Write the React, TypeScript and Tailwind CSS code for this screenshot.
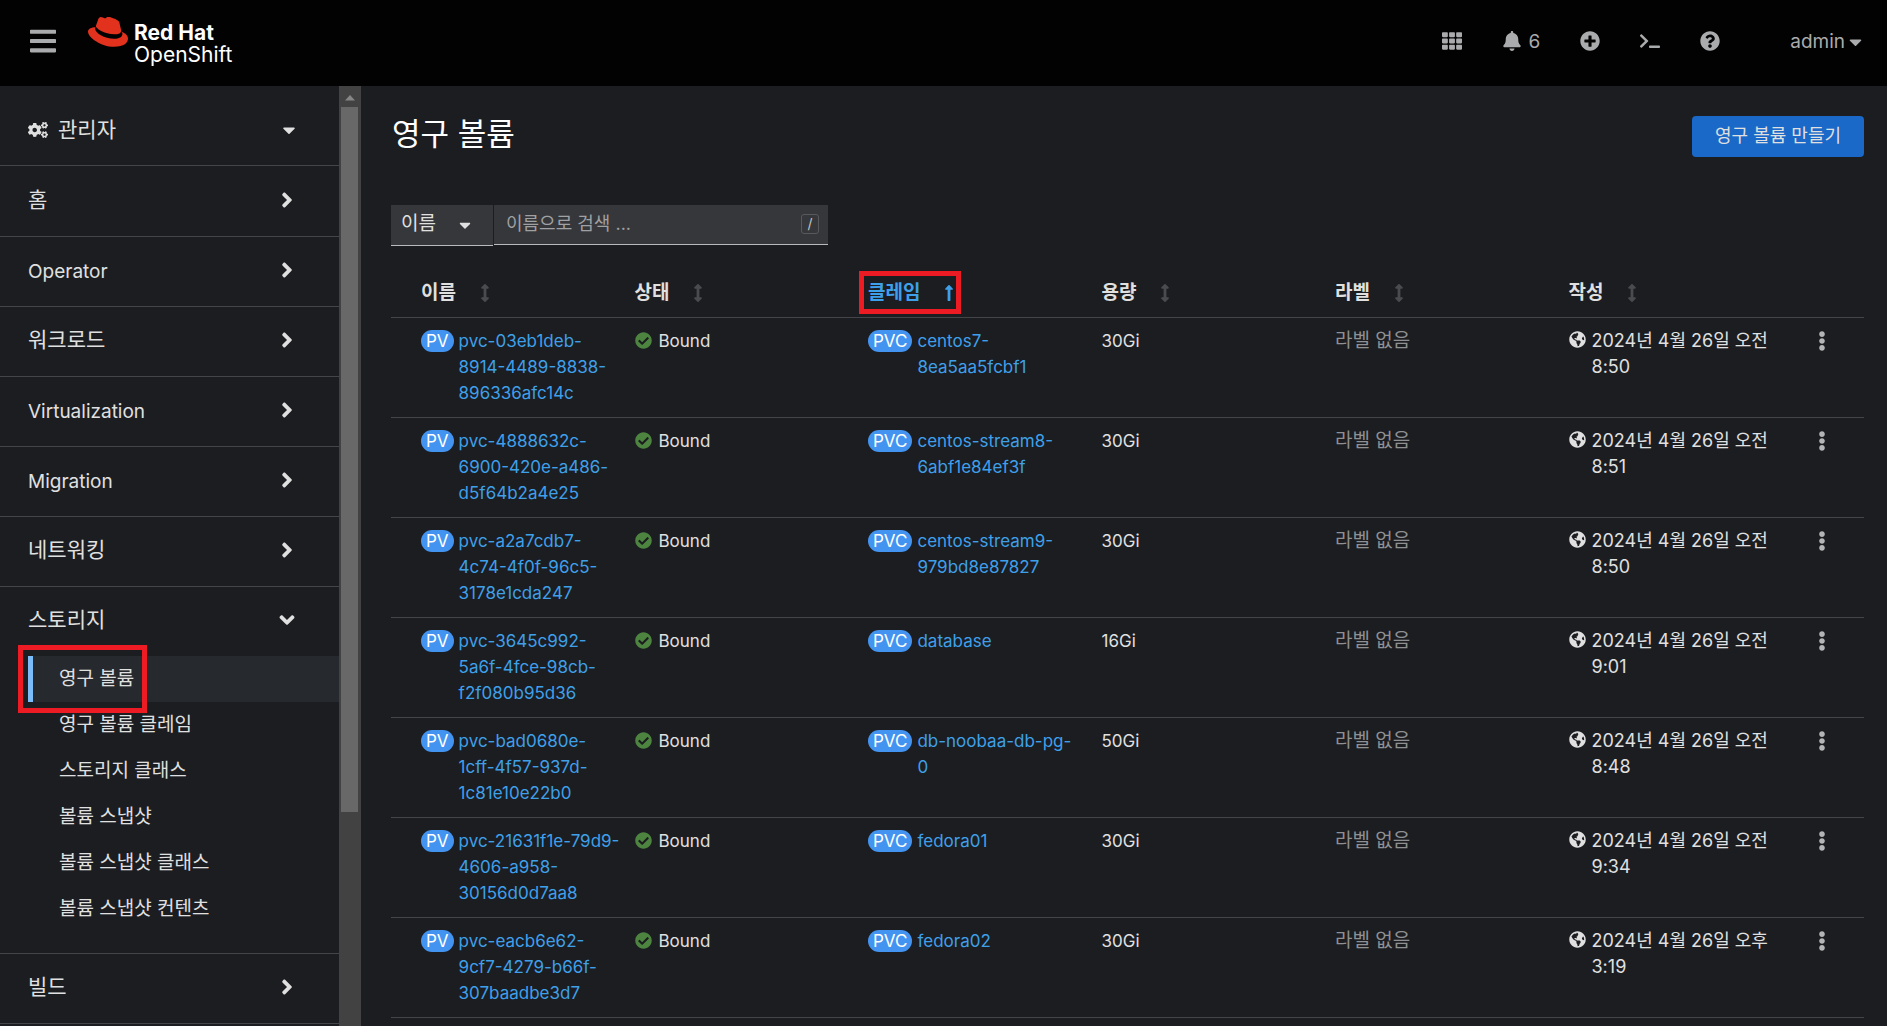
import { useState } from "react";
import type { ReactNode } from "react";
import {
  FaAngleDown,
  FaAngleRight,
  FaArrowsAltV,
  FaBars,
  FaBell,
  FaCaretDown,
  FaCheckCircle,
  FaCogs,
  FaEllipsisV,
  FaGlobeAmericas,
  FaLongArrowAltUp,
  FaPlusCircle,
  FaQuestionCircle,
  FaTerminal,
  FaTh,
} from "react-icons/fa";

type Volume = { name: string; claim: string; size: string; created: string };

const volumes: Volume[] = [
  { name: "pvc-03eb1deb-8914-4489-8838-896336afc14c", claim: "centos7-8ea5aa5fcbf1", size: "30Gi", created: "2024년 4월 26일 오전 8:50" },
  { name: "pvc-4888632c-6900-420e-a486-d5f64b2a4e25", claim: "centos-stream8-6abf1e84ef3f", size: "30Gi", created: "2024년 4월 26일 오전 8:51" },
  { name: "pvc-a2a7cdb7-4c74-4f0f-96c5-3178e1cda247", claim: "centos-stream9-979bd8e87827", size: "30Gi", created: "2024년 4월 26일 오전 8:50" },
  { name: "pvc-3645c992-5a6f-4fce-98cb-f2f080b95d36", claim: "database", size: "16Gi", created: "2024년 4월 26일 오전 9:01" },
  { name: "pvc-bad0680e-1cff-4f57-937d-1c81e10e22b0", claim: "db-noobaa-db-pg-0", size: "50Gi", created: "2024년 4월 26일 오전 8:48" },
  { name: "pvc-21631f1e-79d9-4606-a958-30156d0d7aa8", claim: "fedora01", size: "30Gi", created: "2024년 4월 26일 오전 9:34" },
  { name: "pvc-eacb6e62-9cf7-4279-b66f-307baadbe3d7", claim: "fedora02", size: "30Gi", created: "2024년 4월 26일 오후 3:19" },
];

const columns = ["이름", "상태", "클레임", "용량", "라벨", "작성"];

const storageItems = ["영구 볼륨", "영구 볼륨 클레임", "스토리지 클래스", "볼륨 스냅샷", "볼륨 스냅샷 클래스", "볼륨 스냅샷 컨텐츠"];

function Logo() {
  return (
    <a href="#home" aria-label="Red Hat OpenShift" className="ml-8 flex items-start gap-[6px] text-white">
      <svg viewBox="0 0 40 30" className="h-[30px] w-10" aria-hidden="true">
        <path
          fill="#e2321d"
          d="M26.8 17.3c2.6 0 6.4-.5 6.4-3.6 0-.3 0-.5-.1-.8L31.500 6.100C31.100 4.600 30.800 3.900 28.100 2.500 26 1.400 21.400-.3 20-.3c-1.300 0-1.600 1.600-3.100 1.600C15.400 1.300 14.300.1 12.900.1c-1.300 0-2.200.9-2.900 2.800 0 0-1.800 5.200-2.100 5.900v.4c0 2 8 8.100 18.900 8.100M34 14.800c.4 1.800.4 2 .4 2.200 0 3.100-3.500 4.800-8 4.800-10.300 0-19.300-6-19.300-10 0-.6.1-1.100.3-1.600C3.700 10.400 0 11.400 0 14.700 0 20.100 12.800 29.800 26 29.800c10.100 0 14-4 14-8.200 0-3-2.200-5-6-6.800"
        />
      </svg>
      <span className="flex flex-col pt-[5px] text-[21px] leading-[22px]">
        <span className="font-bold">Red Hat</span>
        <span>OpenShift</span>
      </span>
    </a>
  );
}

function IconButton({ label, children }: { label: string; children: ReactNode }) {
  return (
    <button type="button" aria-label={label} className="flex h-11 items-center gap-[6px] px-5">
      {children}
    </button>
  );
}

function NavSection({ label, latin, open, children }: { label: string; latin?: boolean; open?: boolean; children?: ReactNode }) {
  return (
    <li className="border-b border-[#444548]">
      <button
        type="button"
        aria-expanded={!!open}
        className={`flex h-[69px] w-full items-center justify-between pr-10 pb-1 pl-7 ${latin ? "text-[19px]" : "text-[21px]"}`}
      >
        <span className={latin ? "pt-1" : ""}>{label}</span>
        {open ? <FaAngleDown size={24} /> : <FaAngleRight size={24} />}
      </button>
      {children}
    </li>
  );
}

function Sidebar() {
  return (
    <nav aria-label="관리자" className="w-[339px] shrink-0 overflow-hidden">
      <button type="button" className="flex h-20 w-full items-center border-b border-[#444548] pt-2 pr-10 pl-7 text-[21px]">
        <FaCogs size={20} />
        <span className="ml-[10px]">관리자</span>
        <FaCaretDown size={20} className="ml-auto" />
      </button>
      <ul className="pt-px">
        <NavSection label="홈" />
        <NavSection label="Operator" latin />
        <NavSection label="워크로드" />
        <NavSection label="Virtualization" latin />
        <NavSection label="Migration" latin />
        <NavSection label="네트워킹" />
        <NavSection label="스토리지" open>
          <ul className="pb-[21px] text-[19px]">
            {storageItems.map((item, i) => (
              <li key={item} className="relative">
                <a
                  href={`#storage-${i}`}
                  aria-current={i === 0 ? "page" : undefined}
                  className={
                    i === 0
                      ? "ml-7 flex h-[46px] items-center border-l-[5px] border-[#7cbcf8] bg-[#26292d] pl-[26px]"
                      : "ml-7 flex h-[46px] items-center pl-[31px]"
                  }
                >
                  {item}
                </a>
                {i === 0 && (
                  <span className="pointer-events-none absolute -top-[11px] left-[18px] z-10 h-[68px] w-[129px] border-[5px] border-[#ed1c24]" />
                )}
              </li>
            ))}
          </ul>
        </NavSection>
        <NavSection label="빌드" />
      </ul>
    </nav>
  );
}

function SidebarScrollbar() {
  return (
    <div aria-hidden="true" className="flex w-[22px] shrink-0 flex-col items-center bg-[#424242] pr-px">
      <svg viewBox="0 0 10 6" className="mt-[9px] mb-[6px] h-[6px] w-[10px] shrink-0">
        <path d="M5 0l5 5.500H0z" fill="#868686" />
      </svg>
      <div className="h-3/4 w-[17px] bg-[#686868]" />
    </div>
  );
}

function Resource({ badge, name }: { badge: string; name: string }) {
  return (
    <div className="flex items-start gap-[5px]">
      <span className="mt-[2px] shrink-0 rounded-full bg-[#4394f0] px-[5px] text-[17px] leading-[22px] text-white">{badge}</span>
      <a href={`#${name}`} className="text-[#3fa0ea]">
        {name}
      </a>
    </div>
  );
}

export default function App() {
  const [query, setQuery] = useState("");
  return (
    <div className="flex h-screen flex-col overflow-hidden bg-[#1b1d21] font-['Inter','Noto_Sans_CJK_KR',sans-serif] text-[17px] leading-[26px] text-[#e0e0e0]">
      <header className="flex h-[86px] shrink-0 items-start bg-[#020202] text-[#aaabac]">
        <button type="button" aria-label="메뉴" className="mt-[26px] ml-[30px]">
          <FaBars size={30} className="w-[26px]" />
        </button>
        <div className="pt-[17px]">
          <Logo />
        </div>
        <div className="mt-[19px] ml-auto flex items-center pr-[25px] text-[19px]">
          <IconButton label="애플리케이션">
            <FaTh size={20} />
          </IconButton>
          <IconButton label="알림 6개">
            <FaBell size={20} />
            <span className="pt-[2px]">6</span>
          </IconButton>
          <IconButton label="추가">
            <FaPlusCircle size={20} />
          </IconButton>
          <IconButton label="터미널">
            <FaTerminal size={20} />
          </IconButton>
          <IconButton label="도움말">
            <FaQuestionCircle size={20} />
          </IconButton>
          <button type="button" className="ml-[50px] flex h-11 items-center gap-1 pt-[2px]">
            <span>admin</span>
            <FaCaretDown size={20} className="w-[13px]" />
          </button>
        </div>
      </header>

      <div className="flex min-h-0 flex-1">
        <Sidebar />
        <SidebarScrollbar />
        <main className="min-w-0 flex-1 overflow-hidden pr-[23px] pl-[30px]">
          <div className="flex h-[119px] items-start justify-between pt-[30px]">
            <h1 className="pl-px text-[31px] leading-9 text-white">영구 볼륨</h1>
            <button type="button" className="h-[41px] rounded-[4px] bg-[#1a68c7] px-[23px] pb-[2px] text-[18px]">
              영구 볼륨 만들기
            </button>
          </div>

          <div className="flex items-start gap-px">
            <div className="relative w-[102px] border-b border-[#b9babc] bg-[#36373a]">
              <select aria-label="필터" className="h-10 w-full appearance-none bg-transparent pb-[2px] pl-[10px] text-[19px]">
                <option>이름</option>
                <option>라벨</option>
              </select>
              <FaCaretDown size={18} className="pointer-events-none absolute top-[11px] right-[19px]" />
            </div>
            <div className="relative w-[334px] border-b border-[#b9babc] bg-[#36373a]">
              <input
                type="text"
                aria-label="이름으로 검색"
                value={query}
                onChange={(e) => setQuery(e.target.value)}
                placeholder="이름으로 검색 ..."
                className="h-[39px] w-full bg-transparent pr-10 pb-[2px] pl-3 text-[18px] outline-none placeholder:text-[#a0a1a3]"
              />
              <kbd className="absolute top-[9px] right-[9px] flex h-5 w-[18px] items-center justify-center rounded-[3px] border border-[#58595c] font-['Inter'] text-sm text-[#c4c5c6]">
                /
              </kbd>
            </div>
          </div>

          <table className="mt-[21px] w-full table-fixed border-collapse">
            <colgroup>
              <col />
              <col />
              <col />
              <col />
              <col />
              <col />
              <col className="w-[72px]" />
            </colgroup>
            <thead>
              <tr className="h-[50px] border-b border-[#444548]">
                {columns.map((label, i) => {
                  const sorted = i === 2;
                  return (
                    <th
                      key={label}
                      scope="col"
                      aria-sort={sorted ? "ascending" : undefined}
                      className={`pt-[2px] text-left text-[19px] font-bold ${i === 0 ? "pl-[30px]" : "pl-[10px]"} ${sorted ? "text-[#3fa0ea]" : ""}`}
                    >
                      <button type="button" className="relative flex items-center gap-5 font-bold">
                        <span>{label}</span>
                        {sorted ? <FaLongArrowAltUp size={18} /> : <FaArrowsAltV size={18} className="text-[#4a4b4e]" />}
                        {sorted && (
                          <span className="pointer-events-none absolute -top-[9px] -left-[9px] h-[43px] w-[102px] border-[5px] border-[#ed1c24]" />
                        )}
                      </button>
                    </th>
                  );
                })}
                <td />
              </tr>
            </thead>
            <tbody>
              {volumes.map((v) => (
                <tr key={v.name} className="h-[100px] border-b border-[#444548] align-top [&>td]:pt-[10px] [&>td]:pl-[10px]">
                  <td className="pr-1 pl-[30px]!">
                    <Resource badge="PV" name={v.name} />
                  </td>
                  <td>
                    <span className="flex items-center gap-[7px]">
                      <FaCheckCircle size={17} className="text-[#4d8540]" />
                      Bound
                    </span>
                  </td>
                  <td className="pr-[10px]">
                    <Resource badge="PVC" name={v.claim} />
                  </td>
                  <td>{v.size}</td>
                  <td className="text-[19px] text-[#8f9092]">라벨 없음</td>
                  <td className="pr-[10px]">
                    <span className="flex items-start gap-[6px] text-[18px] break-keep">
                      <FaGlobeAmericas size={17} className="mt-[3px] shrink-0" />
                      <span>{v.created}</span>
                    </span>
                  </td>
                  <td>
                    <button type="button" aria-label="작업 메뉴" className="flex h-[26px] w-[40px] items-center justify-center text-[#b4b5b6]">
                      <FaEllipsisV size={20} />
                    </button>
                  </td>
                </tr>
              ))}
            </tbody>
          </table>
        </main>
      </div>
    </div>
  );
}
